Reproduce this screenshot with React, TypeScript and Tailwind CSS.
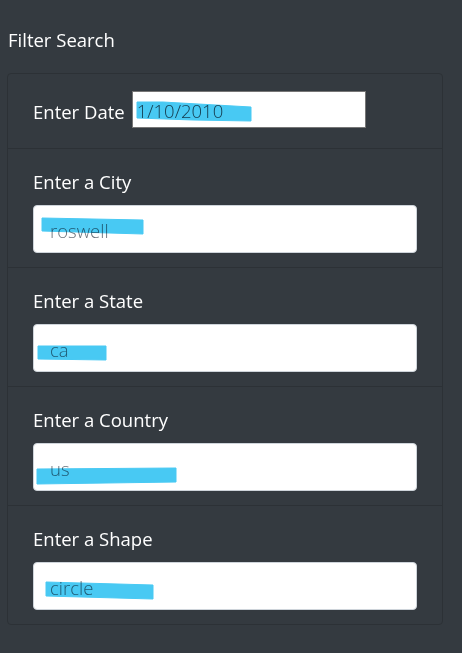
import React from "react";

type Stroke = { points: string; w: number; h: number };

const FIELDS: { label: string; value: string; stroke: Stroke }[] = [
  { label: "Enter a City", value: "roswell", stroke: { points: "8,12 109,14 109,28 8,25", w: 384, h: 48 } },
  { label: "Enter a State", value: "ca", stroke: { points: "4,21 72,21 72,35 4,34", w: 384, h: 48 } },
  { label: "Enter a Country", value: "us", stroke: { points: "3,25 142,24 142,38 3,40", w: 384, h: 48 } },
  { label: "Enter a Shape", value: "circle", stroke: { points: "12,19 119,22 119,36 12,33", w: 384, h: 48 } },
];

function Marker({ stroke }: { stroke: Stroke }) {
  // highlighter scribble drawn on top of the field
  return (
    <svg
      className="absolute inset-0 pointer-events-none mix-blend-multiply"
      width={stroke.w}
      height={stroke.h}
      viewBox={`0 0 ${stroke.w} ${stroke.h}`}
    >
      <polygon points={stroke.points} fill="#48c9f3" strokeLinejoin="round" stroke="#48c9f3" strokeWidth="1" />
    </svg>
  );
}

export default function App() {
  return (
    <div
      className="min-h-screen w-full bg-[#343a40] pt-[26px] pl-[7px]"
      style={{ fontFamily: '"Open Sans", "Noto Sans", sans-serif' }}
    >
      <h5 className="pl-px text-[18.5px] leading-[27px] text-white mb-[20px]">Filter Search</h5>
      <div className="w-[436px] rounded border border-[#2c3136]">
        <div className="flex items-center h-[75px] px-[25px] border-b border-[#2c3136]">
          <label className="text-[18.5px] leading-[27px] text-white">Enter Date</label>
          <div className="relative ml-[7px] mb-[4px] w-[234px] h-[37px] bg-white border border-[#767676]">
            <input
              readOnly
              value="1/10/2010"
              className="w-full h-full bg-transparent pl-[4px] pt-[2px] text-[18.5px] font-light text-[#495057] outline-none"
              style={{ fontFamily: '"Open Sans", sans-serif' }}
            />
            <Marker stroke={{ points: "4,10 30,10 118,15 118,29 60,28 4,26", w: 234, h: 37 }} />
          </div>
        </div>
        {FIELDS.map((f, i) => (
          <div
            key={f.label}
            className={`px-[25px] pt-[19px] pb-[14px] ${i < FIELDS.length - 1 ? "border-b border-[#2c3136]" : ""}`}
          >
            <label className="block text-[18.5px] leading-[27px] text-white mb-[10px]">{f.label}</label>
            <div className="relative w-[384px] h-[48px] bg-white rounded border border-[#ced4da]">
              <input
                readOnly
                value={f.value}
                className="w-full h-full bg-transparent pl-[16px] pt-[3px] text-[18.5px] font-light text-[#6c757d] outline-none"
                style={{ fontFamily: '"Open Sans", sans-serif' }}
              />
              <Marker stroke={f.stroke} />
            </div>
          </div>
        ))}
      </div>
    </div>
  );
}
